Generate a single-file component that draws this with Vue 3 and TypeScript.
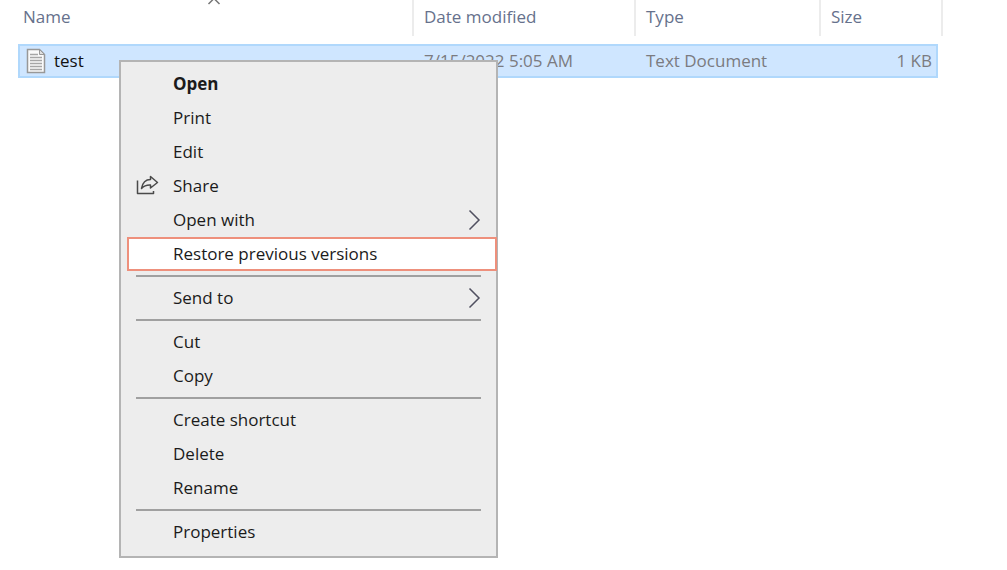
<script setup lang="ts">
interface MenuItem {
  label: string
  bold?: boolean
  share?: boolean
  submenu?: boolean
  highlighted?: boolean
}

const groups: MenuItem[][] = [
  [
    { label: 'Open', bold: true },
    { label: 'Print' },
    { label: 'Edit' },
    { label: 'Share', share: true },
    { label: 'Open with', submenu: true },
    { label: 'Restore previous versions', highlighted: true },
  ],
  [{ label: 'Send to', submenu: true }],
  [{ label: 'Cut' }, { label: 'Copy' }],
  [{ label: 'Create shortcut' }, { label: 'Delete' }, { label: 'Rename' }],
  [{ label: 'Properties' }],
]
</script>

<template>
  <main class="explorer">
    <table class="files">
      <thead>
        <tr class="head">
          <th>
            Name
            <svg class="sort" width="16" height="6" viewBox="0 0 16 6" aria-hidden="true">
              <path d="M2.5 4 8 -1.5 13.5 4" fill="none" stroke="#777" stroke-width="1.5" />
            </svg>
          </th>
          <th>Date modified</th>
          <th>Type</th>
          <th>Size</th>
        </tr>
      </thead>
      <tbody>
        <tr class="row">
          <td class="name">
            <svg width="20" height="26" viewBox="0 0 20 26" aria-hidden="true">
              <path d="M1.5 1.5H13.5L18.5 6.5V24.5H1.5Z" fill="#fafafa" stroke="#989898" stroke-width="1.5" />
              <path d="M13.5 1.5V6.5H18.5Z" fill="#e0e0e0" stroke="#989898" />
              <path d="M4 6.5H12M4 9.5H16M4 12.5H16M4 15.5H16M4 18.5H16M4 21.5H16" stroke="#a6a6a6" stroke-width="1.3" />
            </svg>
            test
          </td>
          <td>7/15/2022 5:05 AM</td>
          <td>Text Document</td>
          <td class="size">1 KB</td>
        </tr>
      </tbody>
    </table>

    <div class="menu" role="menu">
      <div v-for="(group, g) in groups" :key="g" class="group" role="group">
        <button
          v-for="item in group"
          :key="item.label"
          type="button"
          role="menuitem"
          class="item"
          :class="{ bold: item.bold, highlighted: item.highlighted }"
        >
          <span class="icon">
            <svg v-if="item.share" width="24" height="22" viewBox="0 0 24 22" aria-hidden="true">
              <path
                d="M2.5 5.5V18.5H18.5V16M6.5 13.5C7.5 8 10.5 4.5 15.5 4.5V1.5L22.5 7.5L15.5 13V10C12 9.8 9 10.8 6.5 13.5Z"
                fill="none"
                stroke="#4a4a4a"
                stroke-width="1.5"
                stroke-linejoin="round"
              />
            </svg>
          </span>
          <span class="label">{{ item.label }}</span>
          <svg v-if="item.submenu" width="14" height="22" viewBox="0 0 14 22" aria-hidden="true">
            <path d="M1.5 1.5 11 11 1.5 20.5" fill="none" stroke="#505060" stroke-width="1.5" />
          </svg>
        </button>
      </div>
    </div>
  </main>
</template>

<style>
body {
  margin: 0;
  background: #fff;
}
</style>

<style scoped>
.explorer {
  position: relative;
  z-index: 0;
  min-height: 100vh;
  padding: 0 64px 0 18px;
  box-sizing: border-box;
  font-family: "Open Sans", "Noto Sans", sans-serif;
  font-size: 17px;
  line-height: 32px;
}

.files,
.files thead,
.files tbody {
  display: block;
}

.head,
.row {
  display: grid;
  grid-template-columns: 396fr 222fr 185fr 122fr;
}

.head th {
  position: relative;
  height: 36px;
  padding: 1px 0 0 10px;
  border-right: 2px solid #ececec;
  box-sizing: border-box;
  color: #66718c;
  font-weight: 400;
  text-align: left;
}

.head th:first-child {
  padding-left: 5px;
}

.sort {
  position: absolute;
  top: 0;
  left: 188px;
}

.row {
  position: relative;
  margin-top: 8px;
  color: #7b7b80;
}

.row::before {
  content: "";
  position: absolute;
  z-index: -1;
  inset: 0 5px 0 0;
  border: 2px solid #b0d8fc;
  background: #cfe6ff;
}

.row td {
  height: 34px;
  padding: 1px 0 1px 10px;
  box-sizing: border-box;
}

.row .name {
  display: flex;
  align-items: center;
  gap: 8px;
  padding-left: 8px;
  color: #111;
}

.row .size {
  padding-right: 11px;
  text-align: right;
}

.menu {
  position: absolute;
  z-index: 1;
  top: 60px;
  left: 119px;
  width: 379px;
  padding: 5px 0 7px;
  border: 2px solid #b4b4b4;
  box-sizing: border-box;
  background: #ededed;
}

.group + .group::before {
  content: "";
  display: block;
  height: 2px;
  margin: 4px 15px;
  background: #a0a0a0;
}

.item {
  display: flex;
  align-items: center;
  width: 100%;
  height: 34px;
  padding: 0 14px;
  border: 0;
  background: transparent;
  color: #1b1b1b;
  font: inherit;
  text-align: left;
}

.icon {
  display: flex;
  flex: 0 0 38px;
}

.label {
  flex: 1;
}

.item.bold {
  font-weight: 700;
}

.item.highlighted {
  width: auto;
  min-width: calc(100% - 5px);
  margin: 0 -1px 0 6px;
  padding-left: 6px;
  border: 2px solid #ee907c;
  background: #fff;
}
</style>
